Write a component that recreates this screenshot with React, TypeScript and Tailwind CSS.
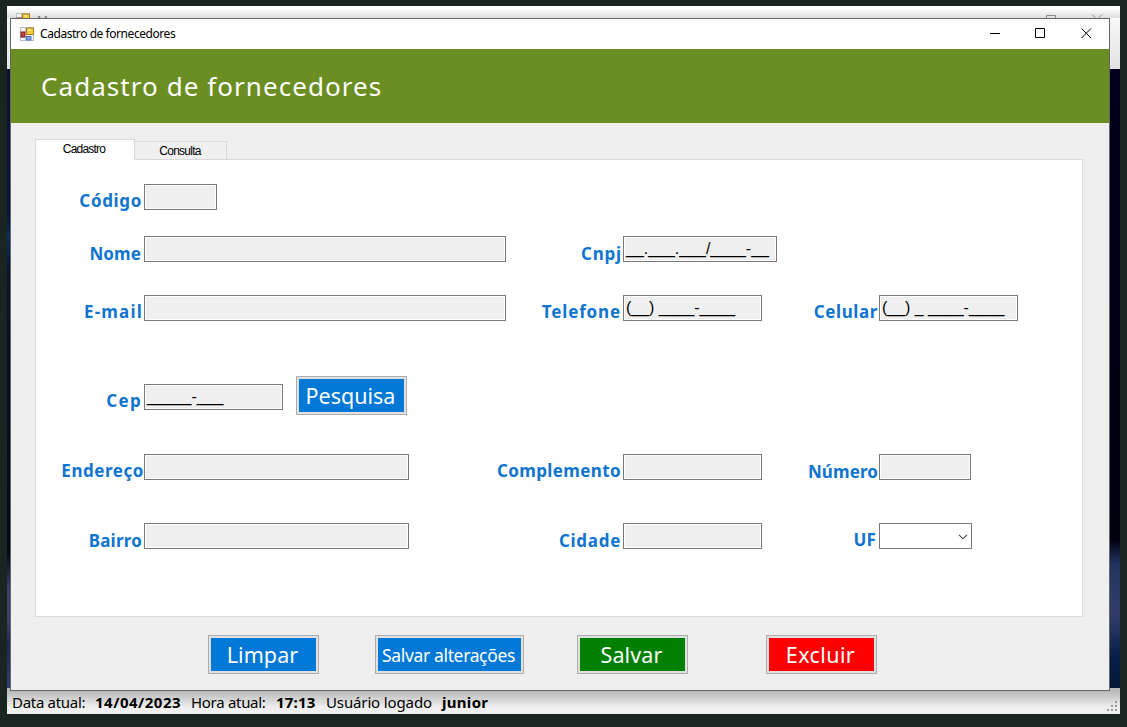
import type { ReactNode } from "react";

function FormIcon() {
  return (
    <svg width="14" height="14" viewBox="0 0 14 14" className="shrink-0">
      <rect x="0.5" y="0.5" width="13" height="13" fill="#f4f4f6" stroke="#b9bdc4" />
      <path d="M0.5 10.5H5.5V13.5M5.5 0.5V5" fill="none" stroke="#c3c7ce" />
      <rect x="1" y="5" width="4" height="5" fill="#c04a3c" stroke="#7e1c1c" />
      <rect x="6.5" y="1" width="7" height="6.5" fill="#f6cb3c" stroke="#a87f1c" />
      <rect x="8" y="2" width="3" height="2" fill="#fde88b" />
      <rect x="6.5" y="9.5" width="4.5" height="3.5" fill="#7fa6ea" stroke="#4a72c4" />
    </svg>
  );
}

type FieldProps = {
  label: string;
  labelClass: string;
  boxClass: string;
  mask?: string;
  children?: ReactNode;
};

function Field({ label, labelClass, boxClass, mask, children }: FieldProps) {
  return (
    <div className="flex items-start">
      <div className="flex flex-1 justify-end whitespace-nowrap text-[17px] leading-[26px] font-bold text-[#0f75cf]">
        <label className={labelClass}>{label}</label>
      </div>
      <div className={`flex h-[26px] shrink-0 border border-[#7a7a7a] p-px ${boxClass}`}>
        <div className="flex flex-1 items-start justify-end bg-[#efefef]">
          {mask && (
            <span className="flex-1 whitespace-pre pl-px font-['Liberation_Sans',sans-serif] text-[16px] leading-[22px] tracking-[-0.02px] text-black">
              {mask}
            </span>
          )}
          {children}
        </div>
      </div>
    </div>
  );
}

function Button({ className, children }: { className: string; children: ReactNode }) {
  return (
    <button className="h-[39px] shrink-0 border border-[#adadad] bg-[#e1e1e1] p-[2px] text-white">
      <span className={`flex h-[33px] items-center justify-center whitespace-nowrap pt-px pr-[2px] ${className}`}>
        {children}
      </span>
    </button>
  );
}

export default function App() {
  return (
    <div className="relative h-[727px] w-[1127px] overflow-hidden bg-[#1a2420] pt-[6px] pl-[7px] font-['Noto_Sans',sans-serif]">
      <div className="flex h-[708px] w-[1113px] flex-col">
        <div className="h-[63px] bg-linear-to-b from-[#fdfdfd] to-[#e2e2e2]">
          <div className="flex h-[12px] justify-between overflow-hidden bg-linear-to-b from-white from-20% to-[#dedede] pt-[7px] pr-[17px] pl-[9px]">
            <div className="flex gap-[7px]">
              <FormIcon />
              <span className="text-[12px] leading-[16px] text-[#777]">Menu</span>
            </div>
            <svg width="58" height="12" viewBox="0 0 58 12" fill="none" stroke="#888">
              <path d="M1.5 12V2.5H10.5V12M47 1.5L57 11.5M57 1.5L47 11.5" />
            </svg>
          </div>
        </div>
        <div className="flex flex-1 justify-between">
          <div className="w-[4px] bg-[linear-gradient(to_bottom,#0a1130_0%,#08163a_24%,#0b2c58_27%,#08122c_33%,#020814_78%,#3b4068_84%,#3b4068_89%,#1c2850_93%,#303d70_100%)]" />
          <div className="w-[12px] bg-[linear-gradient(to_bottom,#00001c_0%,#00000f_76%,#20345f_80%,#313d68_88%,#071f48_95%,#041838_100%)]" />
        </div>
        <div className="flex h-[26px] items-start justify-between bg-linear-to-b from-[#b8b8b8] from-10% to-[#efefef] to-75% pl-[5px] text-[15px] leading-[26px] text-black">
          <div className="flex whitespace-pre pt-px">
            <span className="w-[83px] tracking-[-0.3px]">Data atual:</span>
            <b className="w-[96px] tracking-[0.5px]">14/04/2023</b>
            <span className="w-[85px] tracking-[-0.3px]">Hora atual:</span>
            <b className="w-[50px] tracking-[0.2px]">17:13</b>
            <span className="w-[116px] tracking-[-0.13px]">Usuário logado</span>
            <b className="tracking-[0.3px]">junior</b>
          </div>
          <svg width="10" height="10" viewBox="0 0 10 10" fill="#9a9a9a" className="mt-[13px] mr-[3px]">
            <path d="M8 0h2v2h-2zM4 4h2v2h-2zM8 4h2v2h-2zM0 8h2v2h-2zM4 8h2v2h-2zM8 8h2v2h-2z" />
          </svg>
        </div>
      </div>

      <main className="absolute top-[18px] left-[10px] flex h-[673px] w-[1100px] flex-col border border-[#666] bg-[#efefef]">
        <header className="flex h-[30px] shrink-0 items-center justify-between bg-white pr-[16px] pl-[9px]">
          <div className="flex items-center gap-[6px]">
            <FormIcon />
            <span className="text-[12px] leading-[16px] tracking-[-0.44px] text-black">Cadastro de fornecedores</span>
          </div>
          <svg width="104" height="12" viewBox="0 0 104 12" fill="none" stroke="black" className="mt-[-2px]">
            <path d="M1 6.5H11M46.5 1.5H55.5V10.5H46.5ZM92.5 1.5L102 11M102 1.5L92.5 11" />
          </svg>
        </header>
        <div className="flex h-[74px] shrink-0 items-center bg-[#6b8e23] pt-px pl-[30px]">
          <h1 className="text-[26px] tracking-[1.06px] text-white">Cadastro de fornecedores</h1>
        </div>

        <div className="flex h-[36px] shrink-0 items-end pt-[16px] pl-[24px] font-['Liberation_Sans',sans-serif] text-[12px] text-black">
          <div className="z-10 mb-[-1px] h-[21px] w-[100px] border border-b-0 border-[#d9d9d9] bg-white pt-[2px] pr-[2px] text-center leading-[15px] tracking-[-0.8px]">
            Cadastro
          </div>
          <div className="h-[18px] w-[92px] border border-b-0 border-l-0 border-[#d9d9d9] bg-[#f0f0f0] pt-px pr-px text-center leading-[17px] tracking-[-0.75px]">
            Consulta
          </div>
        </div>

        <section className="ml-[24px] flex h-[458px] w-[1048px] shrink-0 flex-col border border-[#dadada] bg-white pt-[24px]">
          <div className="flex h-[52px]">
            <div className="w-[181px]">
              <Field label="Código" labelClass="mt-[4px] mr-[2px] tracking-[0.65px]" boxClass="w-[73px]" />
            </div>
          </div>
          <div className="flex h-[59px]">
            <div className="w-[470px]">
              <Field label="Nome" labelClass="mt-[5px] mr-[3px] tracking-[0.1px]" boxClass="w-[362px]" />
            </div>
            <div className="w-[271px]">
              <Field label="Cnpj" labelClass="mt-[5px] mr-[1px] tracking-[0.8px]" boxClass="w-[154px]" mask="__.___.___/____-__" />
            </div>
          </div>
          <div className="flex h-[89px]">
            <div className="w-[470px]">
              <Field label="E-mail" labelClass="mt-[4px] mr-[1px] tracking-[1.2px]" boxClass="w-[362px]" />
            </div>
            <div className="w-[256px]">
              <Field label="Telefone" labelClass="mt-[4px] mr-[2px] tracking-[0.85px]" boxClass="w-[139px]" mask="(__) ____-____" />
            </div>
            <div className="w-[256px]">
              <Field label="Celular" labelClass="mt-[4px] mr-[1px] tracking-[0.6px]" boxClass="w-[139px]" mask="(__) _ ____-____" />
            </div>
          </div>
          <div className="flex h-[70px] items-start">
            <div className="w-[247px]">
              <Field label="Cep" labelClass="mt-[4px] mr-[2px] tracking-[1.3px]" boxClass="w-[139px]" mask="_____-___" />
            </div>
            <div className="mt-[-8px] ml-[13px] flex">
              <Button className="w-[105px] bg-[#0078d7] text-[21.5px] tracking-[0px]">Pesquisa</Button>
            </div>
          </div>
          <div className="flex h-[69px]">
            <div className="w-[373px]">
              <Field label="Endereço" labelClass="mt-[4px] tracking-[0.55px]" boxClass="w-[265px]" />
            </div>
            <div className="w-[353px]">
              <Field label="Complemento" labelClass="mt-[4px] mr-[2px] tracking-[0.38px]" boxClass="w-[139px]" />
            </div>
            <div className="w-[209px]">
              <Field label="Número" labelClass="mt-[5px] mr-[1px] tracking-[0.1px]" boxClass="w-[92px]" />
            </div>
          </div>
          <div className="flex">
            <div className="w-[373px]">
              <Field label="Bairro" labelClass="mt-[5px] mr-[2px] tracking-[0.2px]" boxClass="w-[265px]" />
            </div>
            <div className="w-[353px]">
              <Field label="Cidade" labelClass="mt-[5px] mr-[2px] tracking-[0.7px]" boxClass="w-[139px]" />
            </div>
            <div className="w-[210px]">
              <Field label="UF" labelClass="mt-[4px] mr-[3px] tracking-[0.1px]" boxClass="w-[93px]">
                <div className="flex h-[22px] flex-1 items-center justify-end bg-white pt-[2px] pr-[2px]">
                  <svg width="10" height="6" viewBox="0 0 10 6" fill="none" stroke="#444" strokeWidth="1.1">
                    <path d="M1 0.8L5 4.8L9 0.8" />
                  </svg>
                </div>
              </Field>
            </div>
          </div>
        </section>

        <footer className="flex pt-[18px] pl-[197px]">
          <Button className="w-[105px] bg-[#0078d7] text-[21.5px] tracking-[0.1px]">Limpar</Button>
          <div className="ml-[56px] flex">
            <Button className="w-[143px] bg-[#0078d7] text-[17.5px] tracking-[-0.35px]">Salvar alterações</Button>
          </div>
          <div className="ml-[53px] flex">
            <Button className="w-[105px] bg-[#008000] text-[21.5px] tracking-[0.1px]">Salvar</Button>
          </div>
          <div className="ml-[78px] flex">
            <Button className="w-[105px] bg-[#ff0000] text-[21.5px] tracking-[0.4px]">Excluir</Button>
          </div>
        </footer>
      </main>
    </div>
  );
}
